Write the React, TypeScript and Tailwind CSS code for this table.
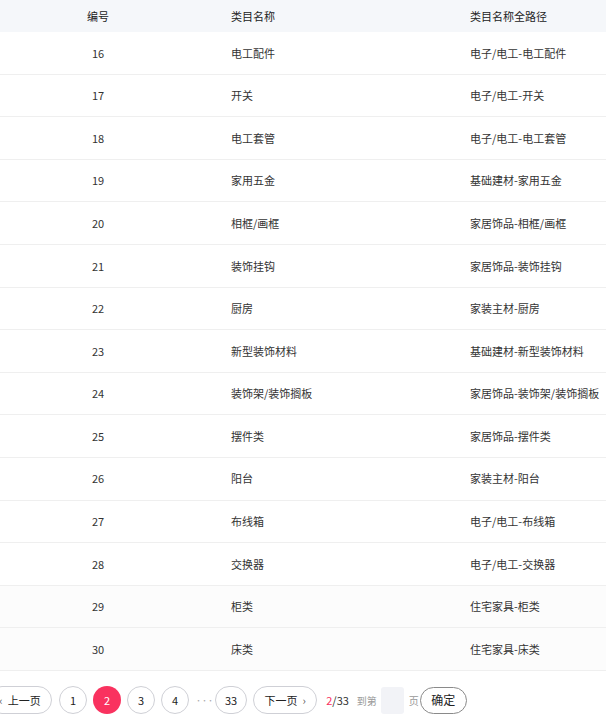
import React from 'react'

const rows = [
  { id: 16, name: '电工配件', path: '电子/电工-电工配件' },
  { id: 17, name: '开关', path: '电子/电工-开关' },
  { id: 18, name: '电工套管', path: '电子/电工-电工套管' },
  { id: 19, name: '家用五金', path: '基础建材-家用五金' },
  { id: 20, name: '相框/画框', path: '家居饰品-相框/画框' },
  { id: 21, name: '装饰挂钩', path: '家居饰品-装饰挂钩' },
  { id: 22, name: '厨房', path: '家装主材-厨房' },
  { id: 23, name: '新型装饰材料', path: '基础建材-新型装饰材料' },
  { id: 24, name: '装饰架/装饰搁板', path: '家居饰品-装饰架/装饰搁板' },
  { id: 25, name: '摆件类', path: '家居饰品-摆件类' },
  { id: 26, name: '阳台', path: '家装主材-阳台' },
  { id: 27, name: '布线箱', path: '电子/电工-布线箱' },
  { id: 28, name: '交换器', path: '电子/电工-交换器' },
  { id: 29, name: '柜类', path: '住宅家具-柜类', tint: true },
  { id: 30, name: '床类', path: '住宅家具-床类', tint: true },
]

const font = { fontFamily: '"Microsoft YaHei", "Noto Sans CJK SC", "Noto Sans", sans-serif' }

function PageBtn({ children, active }: { children: React.ReactNode; active?: boolean }) {
  return (
    <button
      className={
        active
          ? 'h-[28px] min-w-[28px] px-[9px] rounded-full bg-[#f9325f] text-white text-[11px] flex items-center justify-center shrink-0'
          : 'h-[28px] min-w-[28px] px-[9px] rounded-full border border-[#cfd0d6] bg-white text-[#222] text-[11px] flex items-center justify-center shrink-0'
      }
    >
      {children}
    </button>
  )
}

export default function App() {
  return (
    <div className="w-[606px] h-[720px] bg-white overflow-hidden text-[11px] text-[#333]" style={font}>
      {/* Header */}
      <div className="flex h-[32px] items-center bg-[#f5f7fa] text-[#222]">
        <div className="w-[196px] shrink-0 text-center">编号</div>
        <div className="w-[239px] shrink-0 pl-[35px]">类目名称</div>
        <div className="flex-1 pl-[35px] whitespace-nowrap">类目名称全路径</div>
      </div>

      {/* Rows */}
      {rows.map((r) => (
        <div
          key={r.id}
          className={
            'flex h-[42.6px] items-center border-b border-[#efefef] ' + (r.tint ? 'bg-[#fcfcfc]' : 'bg-white')
          }
        >
          <div className="w-[196px] shrink-0 text-center">{r.id}</div>
          <div className="w-[239px] shrink-0 pl-[35px] whitespace-nowrap">{r.name}</div>
          <div className="flex-1 pl-[35px] whitespace-nowrap">{r.path}</div>
        </div>
      ))}

      {/* Pagination */}
      <div className="flex items-center mt-[15.5px] -ml-[12px] whitespace-nowrap">
        <button className="h-[28px] w-[64px] shrink-0 rounded-full border border-[#cfd0d6] bg-white text-[#222] text-[11px] flex items-center justify-center gap-[5px] mr-[7px]">
          <span className="text-[11px] text-[#555] leading-none">‹</span>
          上一页
        </button>
        <div className="flex items-center gap-[6px]">
          <PageBtn>1</PageBtn>
          <PageBtn active>2</PageBtn>
          <PageBtn>3</PageBtn>
          <PageBtn>4</PageBtn>
          <span className="w-[14px] text-center text-[#aaa] text-[7px] tracking-[-1px]">···</span>
          <PageBtn>33</PageBtn>
          <button className="h-[28px] w-[64px] shrink-0 rounded-full border border-[#cfd0d6] bg-white text-[#222] text-[11px] flex items-center justify-center gap-[5px]">
            下一页
            <span className="text-[11px] text-[#555] leading-none">›</span>
          </button>
        </div>
        <span className="text-[11px] ml-[9px]">
          <span className="text-[#f9325f]">2</span>/33
        </span>
        <span className="text-[10px] text-[#999] ml-[8px]">到第</span>
        <div className="w-[23px] h-[27px] rounded-[3px] bg-[#f2f3f7] ml-[4px]" />
        <span className="text-[10px] text-[#999] ml-[5px]">页</span>
        <button className="h-[27px] w-[47px] shrink-0 rounded-full border border-[#8a8a8a] bg-white text-[#222] text-[12px] ml-[1px]">
          确定
        </button>
      </div>
    </div>
  )
}
